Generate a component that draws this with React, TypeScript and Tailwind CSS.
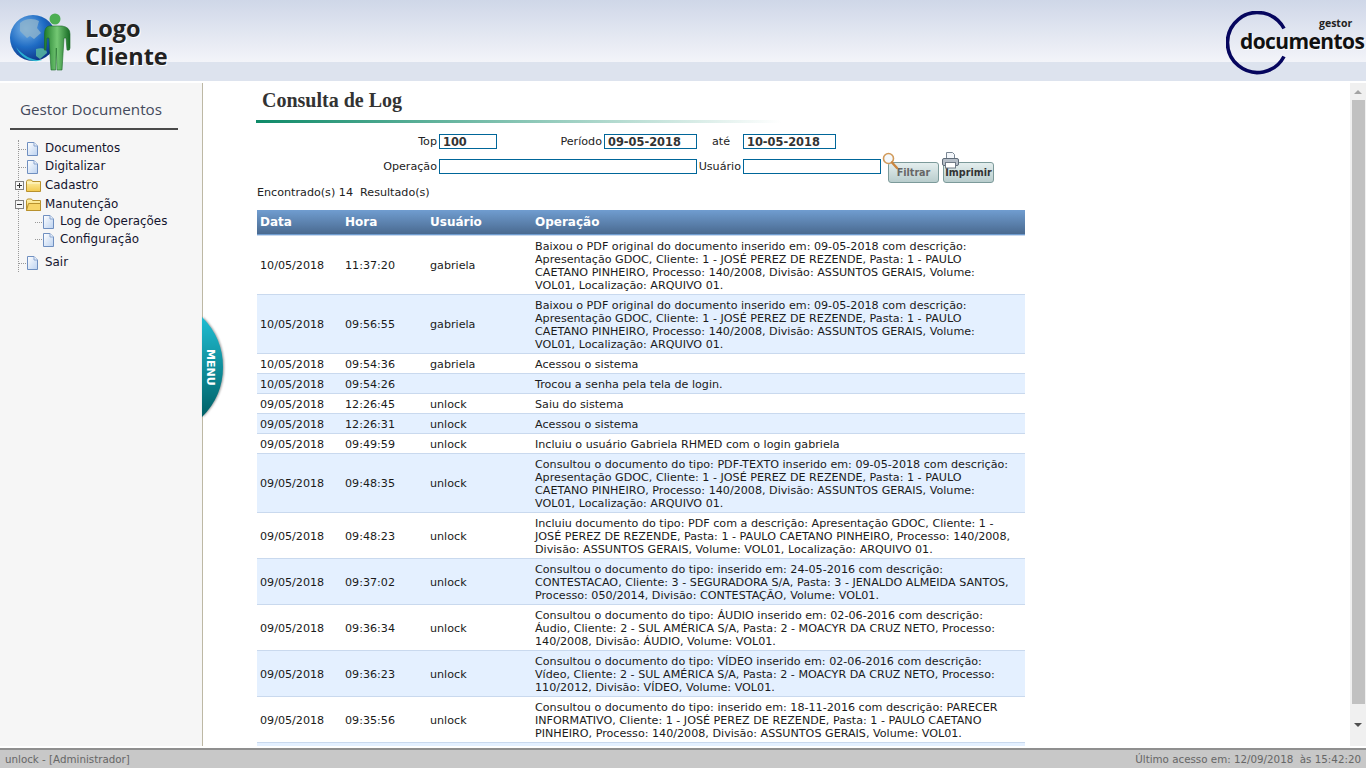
const rows = [
  ["10/05/2018", "11:37:20", "gabriela", "Baixou o PDF original do documento inserido em: 09-05-2018 com descrição:\nApresentação GDOC, Cliente: 1 - JOSÉ PEREZ DE REZENDE, Pasta: 1 - PAULO\nCAETANO PINHEIRO, Processo: 140/2008, Divisão: ASSUNTOS GERAIS, Volume:\nVOL01, Localização: ARQUIVO 01."],
  ["10/05/2018", "09:56:55", "gabriela", "Baixou o PDF original do documento inserido em: 09-05-2018 com descrição:\nApresentação GDOC, Cliente: 1 - JOSÉ PEREZ DE REZENDE, Pasta: 1 - PAULO\nCAETANO PINHEIRO, Processo: 140/2008, Divisão: ASSUNTOS GERAIS, Volume:\nVOL01, Localização: ARQUIVO 01."],
  ["10/05/2018", "09:54:36", "gabriela", "Acessou o sistema"],
  ["10/05/2018", "09:54:26", "", "Trocou a senha pela tela de login."],
  ["09/05/2018", "12:26:45", "unlock", "Saiu do sistema"],
  ["09/05/2018", "12:26:31", "unlock", "Acessou o sistema"],
  ["09/05/2018", "09:49:59", "unlock", "Incluiu o usuário Gabriela RHMED com o login gabriela"],
  ["09/05/2018", "09:48:35", "unlock", "Consultou o documento do tipo: PDF-TEXTO inserido em: 09-05-2018 com descrição:\nApresentação GDOC, Cliente: 1 - JOSÉ PEREZ DE REZENDE, Pasta: 1 - PAULO\nCAETANO PINHEIRO, Processo: 140/2008, Divisão: ASSUNTOS GERAIS, Volume:\nVOL01, Localização: ARQUIVO 01."],
  ["09/05/2018", "09:48:23", "unlock", "Incluiu documento do tipo: PDF com a descrição: Apresentação GDOC, Cliente: 1 -\nJOSÉ PEREZ DE REZENDE, Pasta: 1 - PAULO CAETANO PINHEIRO, Processo: 140/2008,\nDivisão: ASSUNTOS GERAIS, Volume: VOL01, Localização: ARQUIVO 01."],
  ["09/05/2018", "09:37:02", "unlock", "Consultou o documento do tipo: inserido em: 24-05-2016 com descrição:\nCONTESTACAO, Cliente: 3 - SEGURADORA S/A, Pasta: 3 - JENALDO ALMEIDA SANTOS,\nProcesso: 050/2014, Divisão: CONTESTAÇÃO, Volume: VOL01."],
  ["09/05/2018", "09:36:34", "unlock", "Consultou o documento do tipo: ÁUDIO inserido em: 02-06-2016 com descrição:\nÁudio, Cliente: 2 - SUL AMÉRICA S/A, Pasta: 2 - MOACYR DA CRUZ NETO, Processo:\n140/2008, Divisão: ÁUDIO, Volume: VOL01."],
  ["09/05/2018", "09:36:23", "unlock", "Consultou o documento do tipo: VÍDEO inserido em: 02-06-2016 com descrição:\nVídeo, Cliente: 2 - SUL AMÉRICA S/A, Pasta: 2 - MOACYR DA CRUZ NETO, Processo:\n110/2012, Divisão: VÍDEO, Volume: VOL01."],
  ["09/05/2018", "09:35:56", "unlock", "Consultou o documento do tipo: inserido em: 18-11-2016 com descrição: PARECER\nINFORMATIVO, Cliente: 1 - JOSÉ PEREZ DE REZENDE, Pasta: 1 - PAULO CAETANO\nPINHEIRO, Processo: 140/2008, Divisão: ASSUNTOS GERAIS, Volume: VOL01."],
];

function PageIcon() {
  return (
    <svg width="13" height="14" viewBox="0 0 13 14" className="shrink-0">
      <defs>
        <linearGradient id="pg" x1="0" y1="0" x2="1" y2="1">
          <stop offset="0" stopColor="#ffffff" />
          <stop offset="1" stopColor="#bcd2f0" />
        </linearGradient>
      </defs>
      <path d="M1.5 .5H8L11.5 4V13.5H1.5Z" fill="url(#pg)" stroke="#6f8fc0" />
      <path d="M8 .5V4H11.5" fill="#e8f0fb" stroke="#8aa5cf" />
    </svg>
  );
}

function FolderIcon({ open }: { open?: boolean }) {
  return (
    <svg width="15" height="13" viewBox="0 0 15 13" className="shrink-0">
      <defs>
        <linearGradient id="fd" x1="0" y1="0" x2="0" y2="1">
          <stop offset="0" stopColor="#fff3b0" />
          <stop offset="1" stopColor="#f2c84b" />
        </linearGradient>
      </defs>
      <path d="M.5 2.5 1.5 1H5.5L6.5 2.5H14.5V12.5H.5Z" fill="url(#fd)" stroke="#b8912e" />
      {open ? <path d="M.5 12.5 2.5 5.5H14.5V12.5Z" fill="#f7d468" stroke="#b8912e" /> : <path d="M1 4H14" stroke="#fff8d0" />}
    </svg>
  );
}

function BoxToggle({ open }: { open?: boolean }) {
  return (
    <svg width="9" height="9" viewBox="0 0 9 9" className="shrink-0">
      <rect x=".5" y=".5" width="8" height="8" fill="#f6f6f6" stroke="#808080" />
      <path d="M2 4.5H7" stroke="#333" />
      {open ? null : <path d="M4.5 2V7" stroke="#333" />}
    </svg>
  );
}

function TreeRow({ label, h, kind, toggle, child }: { label: string; h: string; kind: "page" | "closed" | "open"; toggle?: boolean; child?: boolean }) {
  return (
    <div className={`flex items-center ${h} ${child ? "pl-[16px]" : ""}`}>
      <div className="flex items-center justify-start w-[7px] shrink-0">
        {toggle ? (
          <div className="ml-[-4px]">
            <BoxToggle open={kind === "open"} />
          </div>
        ) : (
          <div className="w-[7px] border-t border-dotted border-[#999]" />
        )}
      </div>
      {kind === "page" ? <PageIcon /> : <FolderIcon open={kind === "open"} />}
      <span className={`text-[11.9px] text-[#14142e] ${child ? "ml-[5px]" : kind === "page" ? "ml-[6px]" : "ml-[4px]"}`}>{label}</span>
    </div>
  );
}

function Sidebar() {
  return (
    <aside className="relative w-[203px] shrink-0 bg-[#f6f6f6] border-r border-[#bdb8a4]">
      <div className="ml-[10px] w-[168px] h-[47px] pl-[10px] pt-[16px] border-b-2 border-[#4a4a4a] text-[15.2px] leading-[20px] text-[#444a5c] font-['Open_Sans',sans-serif]">
        Gestor Documentos
      </div>
      <div className="ml-[18px] mt-[10px] border-l border-dotted border-[#999] w-[180px]">
        <TreeRow label="Documentos" h="h-[18px]" kind="page" />
        <TreeRow label="Digitalizar" h="h-[18px]" kind="page" />
        <TreeRow label="Cadastro" h="h-[19px]" kind="closed" toggle />
        <TreeRow label="Manutenção" h="h-[19px]" kind="open" toggle />
        <TreeRow label="Log de Operações" h="h-[16px]" kind="page" child />
        <TreeRow label="Configuração" h="h-[19px]" kind="page" child />
        <div className="h-[5px]" />
        <TreeRow label="Sair" h="h-[18px]" kind="page" />
      </div>
    </aside>
  );
}

function Logo() {
  return (
    <div className="flex items-start">
      <svg width="64" height="64" viewBox="0 0 64 64" className="ml-[10px] mt-[11px]">
        <defs>
          <radialGradient id="globe" cx=".35" cy=".3" r=".8">
            <stop offset="0" stopColor="#7db6e8" />
            <stop offset=".5" stopColor="#1f6cc4" />
            <stop offset="1" stopColor="#0a2b7c" />
          </radialGradient>
          <linearGradient id="person" x1="0" y1="0" x2="1" y2="0">
            <stop offset="0" stopColor="#1d7a2a" />
            <stop offset=".5" stopColor="#74c874" />
            <stop offset="1" stopColor="#166a24" />
          </linearGradient>
        </defs>
        <circle cx="23" cy="27" r="23" fill="url(#globe)" />
        <path d="M10 12C15 7 24 7 29 10L27 17 31 22 24 28 20 25 17 27 10 20Z" fill="#8db3cc" opacity=".8" />
        <path d="M26 38C32 36 37 38 37 42L30 48 26 45Z" fill="#59b7a0" opacity=".85" />
        <path d="M6 36C14 46 24 50 32 49 26 52 12 50 6 36Z" fill="#2fd0e0" opacity=".75" />
        <circle cx="45" cy="8" r="5.5" fill="#4cae52" />
        <path d="M39 15H52Q60 16 60 23V37Q60 40 57 39L56 27 54 27 52 59H47L46.3 37 45.6 59H41L39 27 37 27 36 39Q33.500 40 34.500 37V23Q34.500 16 39 15Z" fill="url(#person)" stroke="#1b6a26" strokeWidth=".6" />
      </svg>
      <div className="ml-[11px] mt-[14px] text-[23.5px] leading-[28px] font-bold text-[#222] font-['Open_Sans',sans-serif] [text-shadow:1px_1px_0_#fff]">
        Logo
        <br />
        Cliente
      </div>
    </div>
  );
}

function BrandMark() {
  return (
    <div className="relative w-[140px] h-[65px] mt-[11px]">
      <svg width="64" height="64" viewBox="0 0 64 64" className="absolute left-0 top-0">
        <path d="M58 17.500A30 30 0 1 0 58 45.500" fill="none" stroke="#06065e" strokeWidth="3.6" />
      </svg>
      <span className="absolute left-[14px] top-[16px] text-[21px] leading-[28px] font-bold tracking-[-0.6px] text-[#111] font-['Open_Sans',sans-serif] [text-shadow:1px_1px_0_#fff]">
        documentos
      </span>
      <span className="absolute left-[93px] top-[5px] text-[10.5px] leading-[14px] font-bold text-[#222] font-['Open_Sans',sans-serif]">
        gestor
      </span>
    </div>
  );
}

function Header() {
  return (
    <header className="h-[81px] shrink-0 relative bg-[linear-gradient(#cfd7e8_0,#f3f4f9_62px,#dde3ee_62px,#dde3ee_81px)] flex justify-between">
      <Logo />
      <BrandMark />
    </header>
  );
}

function Field({ w, value }: { w: string; value?: string }) {
  return (
    <div className={`${w} h-[15px] border border-[#006699] bg-white pl-[3px] text-[11.4px] leading-[14px] font-bold text-[#333]`}>
      {value}
    </div>
  );
}

function FilterForm() {
  return (
    <div className="mt-[11px] text-[11.15px] leading-[16px] text-[#222]">
      <div className="flex items-start h-[15px]">
        <div className="w-[182px] text-right pr-[2px]">Top</div>
        <Field w="w-[58px]" value="100" />
        <div className="w-[107px] text-right pr-[2px]">Período</div>
        <Field w="w-[93px]" value="09-05-2018" />
        <div className="w-[46px] pl-[15px]">até</div>
        <Field w="w-[93px]" value="10-05-2018" />
      </div>
      <div className="flex items-start h-[24px] mt-[10px]">
        <div className="w-[182px] text-right pr-[2px]">Operação</div>
        <Field w="w-[258px]" />
        <div className="w-[46px] text-right pr-[2px]">Usuário</div>
        <Field w="w-[138px]" />
        <div className="relative w-[51px] h-[21px] ml-[7px] mt-[3px] rounded-[3px] border border-[#7c9a9a] bg-[linear-gradient(#e4eeee,#b9cdcd)] text-center text-[9.6px] leading-[20px] font-bold text-[#666]">
          <svg width="17" height="19" viewBox="0 0 17 19" className="absolute left-[-7px] top-[-11px]">
            <circle cx="6.5" cy="6.5" r="5" fill="#f4f8fb" stroke="#d19a5a" strokeWidth="1.6" />
            <path d="M10 10.5 15 16" stroke="#c9853f" strokeWidth="2.4" strokeLinecap="round" />
          </svg>
          Filtrar
        </div>
        <div className="relative w-[51px] h-[21px] ml-[4px] mt-[3px] rounded-[3px] border border-[#7c9a9a] bg-[linear-gradient(#e4eeee,#b9cdcd)] text-center text-[9.6px] leading-[20px] font-bold text-[#333]">
          <svg width="17" height="17" viewBox="0 0 17 17" className="absolute left-[-2px] top-[-11px]">
            <path d="M4.5 .5H10.5L12.5 2.5V7H4.5Z" fill="#f4f7fb" stroke="#7a8794" />
            <rect x=".5" y="6.5" width="16" height="7" rx="1.5" fill="#b6bec8" stroke="#5f6b78" />
            <rect x="3.5" y="10.5" width="10" height="5.5" fill="#fff" stroke="#6f7a86" />
          </svg>
          Imprimir
        </div>
      </div>
    </div>
  );
}

function LogTable() {
  return (
    <table className="w-[768px] table-fixed border-collapse text-[11.15px] leading-[13px] text-[#1a1a1a]">
      <thead>
        <tr className="h-[25px] border-b border-[#c9d9ee] bg-[linear-gradient(#709dd0,#4a6a90)] text-left text-[12px] font-bold text-white">
          <th className="w-[85px] pl-[3px] pt-[1px] font-bold">Data</th>
          <th className="w-[85px] pl-[3px] pt-[1px] font-bold">Hora</th>
          <th className="w-[105px] pl-[3px] pt-[1px] font-bold">Usuário</th>
          <th className="pl-[3px] pt-[1px] font-bold">Operação</th>
        </tr>
      </thead>
      <tbody>
        {rows.map((row, i) => (
          <tr key={i} className={`border-b border-[#c9d9ee] ${i % 2 === 1 ? "bg-[#e4f0ff]" : "bg-white"}`}>
            <td className="pl-[3px] pt-[4px] pb-[2px]">{row[0]}</td>
            <td className="pl-[3px] pt-[4px] pb-[2px]">{row[1]}</td>
            <td className="pl-[3px] pt-[4px] pb-[2px]">{row[2]}</td>
            <td className="pl-[3px] pt-[4px] pb-[2px] whitespace-pre">{row[3]}</td>
          </tr>
        ))}
        <tr className="h-[20px] bg-[#e4f0ff]">
          <td colSpan={4} />
        </tr>
      </tbody>
    </table>
  );
}

function Scrollbar() {
  return (
    <div className="w-[16px] shrink-0 bg-[#f0f0f0] flex flex-col items-center">
      <div className="h-[17px] flex items-center justify-center">
        <div className="w-0 h-0 border-x-[4px] border-x-transparent border-b-[4px] border-b-[#a3a3a3]" />
      </div>
      <div className="w-[13px] h-[604px] bg-[#c1c1c1]" />
      <div className="flex-1 flex items-center justify-center">
        <div className="w-0 h-0 border-x-[4px] border-x-transparent border-t-[4px] border-t-[#505050]" />
      </div>
    </div>
  );
}

function MenuTab() {
  return (
    <div className="absolute left-[202px] top-[233px] w-[24px] h-[102px] flex items-center justify-center">
      <svg width="24" height="102" viewBox="0 0 24 102" className="absolute left-0 top-0 drop-shadow-[1px_0_1px_rgba(0,0,0,0.4)]">
        <defs>
          <linearGradient id="tab" x1="0" y1="0" x2="0" y2="1">
            <stop offset="0" stopColor="#20bdd2" />
            <stop offset="1" stopColor="#006066" />
          </linearGradient>
        </defs>
        <path d="M0 1Q21 22 21 51 21 80 0 101Z" fill="url(#tab)" />
      </svg>
      <span className="relative mr-[8px] [writing-mode:vertical-rl] text-[11px] leading-[13px] font-bold text-white">MENU</span>
    </div>
  );
}

export default function App() {
  return (
    <div className="h-[768px] w-[1366px] overflow-hidden flex flex-col bg-white font-['DejaVu_Sans',sans-serif]">
      <Header />
      <div className="relative mt-[2px] h-[663px] flex">
        <Sidebar />
        <main className="flex-1 overflow-hidden pl-[54px]">
          <h1 className="pl-[5px] pt-[5px] h-[37px] text-[20px] leading-[24px] font-bold text-[#333] font-['Liberation_Serif',serif]">
            Consulta de Log
          </h1>
          <div className="ml-[-1px] h-[3px] w-[525px] bg-[linear-gradient(to_right,#0e8a68,#ffffff)]" />
          <FilterForm />
          <div className="mt-[2px] h-[25px] text-[11.15px] leading-[15px] text-[#222] whitespace-pre">Encontrado(s) 14  Resultado(s)</div>
          <LogTable />
        </main>
        <Scrollbar />
        <MenuTab />
      </div>
      <div className="h-[2px] bg-white" />
      <footer className="flex-1 flex items-center justify-between border-t-2 border-[#8f8f8f] bg-[#c8c8c8] pl-[5px] pr-[5px] pt-[1px] text-[10.3px] text-[#666] whitespace-pre">
        <span>unlock - [Administrador]</span>
        <span>Último acesso em: 12/09/2018  às 15:42:20</span>
      </footer>
    </div>
  );
}
